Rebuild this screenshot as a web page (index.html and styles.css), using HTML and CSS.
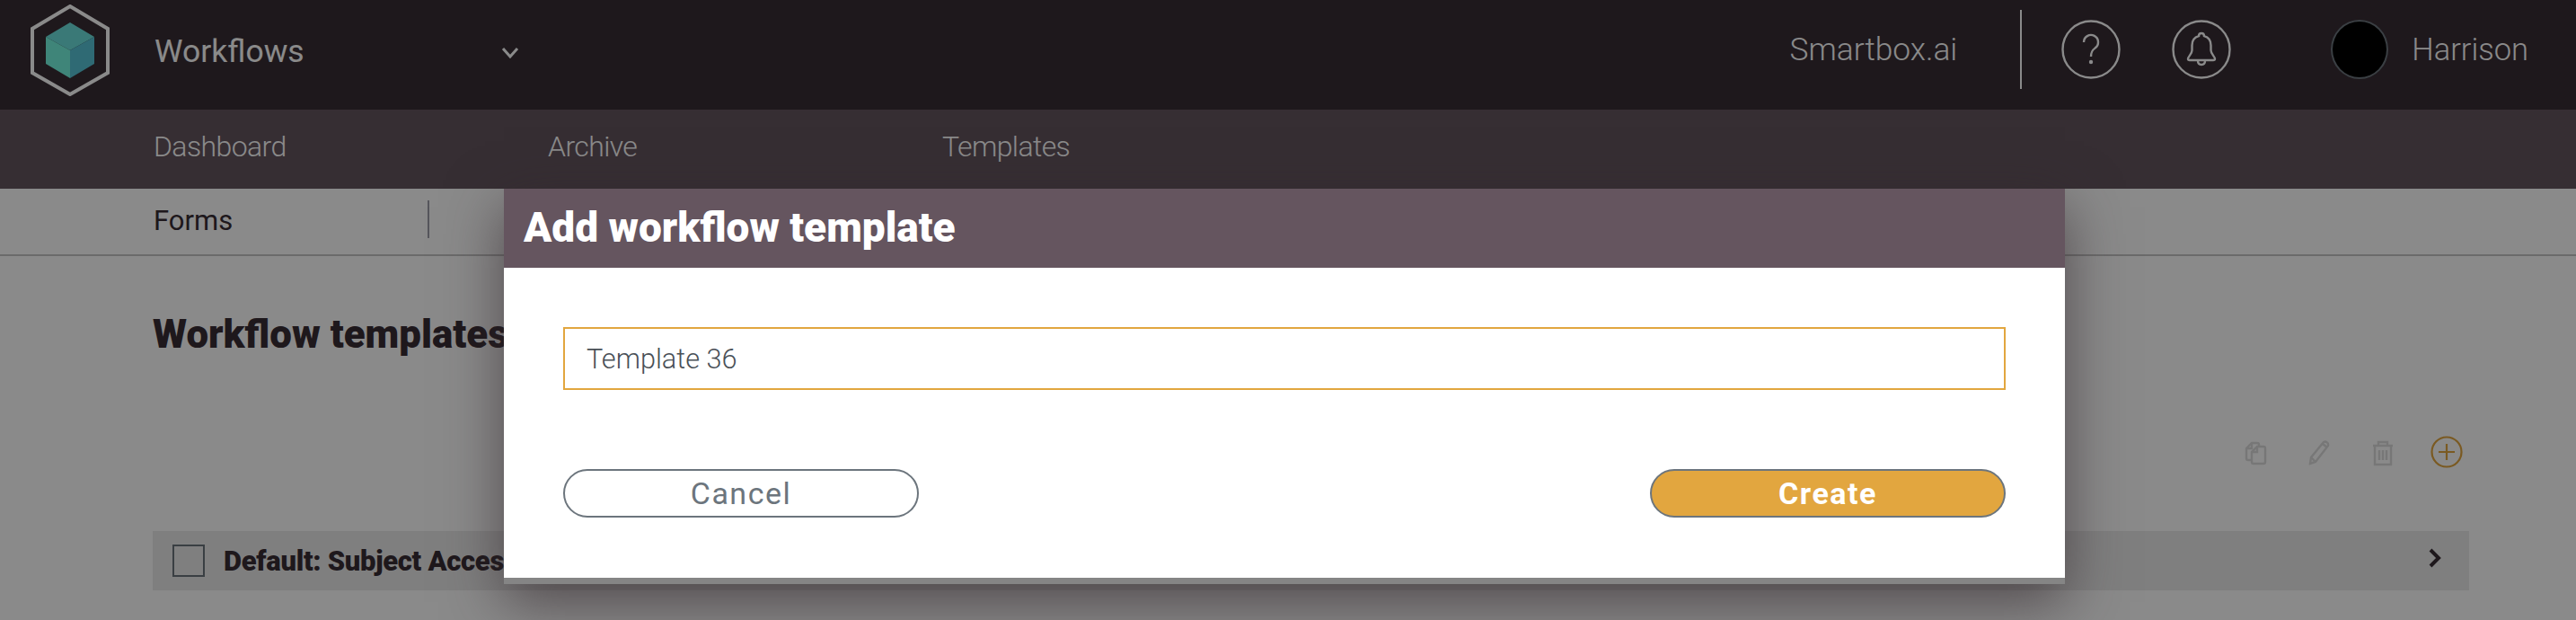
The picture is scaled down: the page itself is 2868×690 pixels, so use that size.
FILE: index.html
```html
<!DOCTYPE html>
<html lang="en">
<head>
    <meta charset="UTF-8">
    <meta name="viewport" content="width=device-width, initial-scale=1.0">
    <title>Workflow templates</title>
    <link rel="stylesheet" href="styles.css">
</head>
<body>
    <header class="topbar">
        <svg class="logo" width="88" height="102" viewBox="34 5 88 102">
            <polygon points="78,7 120,32 120,81 78,105 36,81 36,32" fill="none" stroke="#fff" stroke-width="4"/>
            <polygon points="78,25 105,41 78,56 51,41" fill="#6be0dc"/>
            <polygon points="51,41 78,56 78,87 51,71" fill="#75f5e0"/>
            <polygon points="78,56 105,41 105,71 78,87" fill="#57c4d6"/>
        </svg>
        <div class="app-title">Workflows</div>
        <svg class="app-caret" width="20" height="13" viewBox="0 0 20 13">
            <path d="M2 2l8 9 8-9" fill="none" stroke="#fff" stroke-width="3"/>
        </svg>
        <div class="top-right">
            <span class="top-text top-brand">Smartbox.ai</span>
            <span class="top-divider"></span>
            <svg class="help-icon" width="66" height="66" viewBox="0 0 66 66" fill="none" stroke="#fff" stroke-width="2.4">
                <circle cx="33" cy="33" r="31.5"/>
                <path d="M25 25a8 8 0 1 1 12.500 6.600c-3 2.200-4.500 4-4.500 9.400"/>
                <circle cx="33" cy="47" r="2.200" fill="#fff" stroke="none"/>
            </svg>
            <svg class="bell-icon" width="66" height="66" viewBox="0 0 66 66" fill="none" stroke="#fff" stroke-width="2.400">
                <circle cx="33" cy="33" r="31.500"/>
                <path d="M33 15c-1.800 0-3 1.300-3 3.200c-5 1.400-7.500 5.500-7.500 10.300v5.500c0 4-4.500 7-4.500 9.500c0 1 .8 1.500 2 1.500h26c1.200 0 2-.5 2-1.500c0-2.500-4.500-5.500-4.500-9.500v-5.500c0-4.800-2.500-8.900-7.500-10.300c0-1.900-1.200-3.200-3-3.200z"/>
                <path d="M29 45.500c0 3 1.800 4.500 4 4.500s4-1.500 4-4.500"/>
            </svg>
            <span class="avatar"></span>
            <span class="top-text">Harrison</span>
        </div>
    </header>

    <nav class="subnav">
        <a>Dashboard</a>
        <a>Archive</a>
        <a>Templates</a>
    </nav>

    <div class="tabs">
        <div class="tab">Forms</div>
    </div>

    <main class="content">
        <h1>Workflow templates</h1>
        <div class="toolbar">
            <svg width="36" height="36" viewBox="0 0 36 36" fill="none" stroke="#dcdcdc" stroke-width="2.400">
                <path d="M14 27h-4a2 2 0 0 1-2-2V14l6-6h6a2 2 0 0 1 2 2v2"/>
                <path d="M14 8v6H8"/>
                <path d="M20 12h7a2 2 0 0 1 2 2v15a2 2 0 0 1-2 2H16a2 2 0 0 1-2-2V18z"/>
                <path d="M20 12v6h-6"/>
            </svg>
            <svg width="36" height="36" viewBox="0 0 36 36" fill="none" stroke="#dcdcdc" stroke-width="2.400">
                <path d="M9 24L23 7a3.500 3.500 0 0 1 5 4L14 29l-6 2z"/>
                <path d="M9 24l5 5M22 9l5 4"/>
            </svg>
            <svg width="36" height="36" viewBox="0 0 36 36" fill="none" stroke="#dcdcdc" stroke-width="2.400">
                <path d="M7 11h22M9 11v21h18V11M13 11V7h10v4"/>
                <path d="M14 16v11M18 16v11M22 16v11"/>
            </svg>
            <svg width="36" height="36" viewBox="0 0 36 36" fill="none" stroke="#e2a63f" stroke-width="2.200">
                <circle cx="18" cy="18" r="16.500"/>
                <path d="M9 18h18M18 9v18"/>
            </svg>
        </div>
        <div class="row">
            <span class="checkbox"></span>
            <span class="row-name">Default: Subject Access Request</span>
            <svg class="row-arrow" width="16" height="24" viewBox="0 0 16 24">
                <path d="M3 3l9 9-9 9" fill="none" stroke="#382d35" stroke-width="4"/>
            </svg>
        </div>
    </main>

    <div class="overlay"></div>

    <section class="modal">
        <div class="modal-head">Add workflow template</div>
        <div class="modal-body">
            <input class="name-input" type="text" value="Template 36">
            <div class="modal-actions">
                <button class="btn btn-cancel">Cancel</button>
                <button class="btn btn-create">Create</button>
            </div>
        </div>
    </section>
</body>
</html>
```

FILE: styles.css
```css
* {
    box-sizing: border-box;
}
html, body {
    height: 690px;
    overflow: hidden;
}
body {
    margin: 0;
    font-family: Roboto, Arial, sans-serif;
    background: #fff;
    color: #382d35;
}

/* top bar */
.topbar {
    display: flex;
    align-items: center;
    height: 122px;
    padding: 0 53px 0 34px;
    background: #382d35;
    color: #fff;
}
.logo {
    flex: none;
    margin-bottom: 11px;
}
.app-title {
    width: 386px;
    margin-left: 50px;
    font-size: 35.500px;
    margin-bottom: 8px;
}
.app-caret {
    margin-bottom: 6px;
}
.top-right {
    display: flex;
    align-items: center;
    margin-left: auto;
    margin-bottom: 12px;
}
.top-text {
    font-size: 34.500px;
    font-weight: 300;
}
.top-brand {
    font-size: 35.300px;
}
.top-divider {
    width: 2px;
    height: 88px;
    margin: 0 44px 0 70px;
    background: #fff;
}
.help-icon {
    margin-right: 57px;
}
.bell-icon {
    margin-right: 111px;
}
.avatar {
    width: 64px;
    height: 66px;
    margin-right: 26px;
    border: 2px solid #6c757d;
    border-radius: 50%;
    background: #000;
}

/* second and third nav rows */
.subnav {
    display: grid;
    grid-template-columns: 439px 439px 439px;
    align-items: center;
    height: 88px;
    padding: 0 0 6px 171px;
    background: #65555f;
    color: #fff;
    font-size: 32px;
    font-weight: 300;
    letter-spacing: -0.600px;
}
.tabs {
    display: flex;
    align-items: center;
    height: 75px;
    padding-left: 171px;
    border-bottom: 2px solid #c6c6c6;
}
.tab {
    width: 307px;
    height: 42px;
    margin-bottom: 5px;
    border-right: 2px solid #a0a0aa;
    font-size: 31px;
    line-height: 46px;
}

/* page content */
.content {
    padding: 0 119px 0 170px;
}
h1 {
    margin: 62px 0 0;
    font-size: 43.800px;
    line-height: 50px;
    font-weight: 900;
}
.toolbar {
    display: flex;
    justify-content: flex-end;
    gap: 35px;
    margin-top: 88px;
    padding-right: 7px;
}
.row {
    display: flex;
    align-items: center;
    height: 66px;
    margin-top: 70px;
    padding: 0 30px 0 22px;
    background: #ebebeb;
}
.checkbox {
    width: 36px;
    height: 36px;
    border: 2px solid #6c757d;
    background: #ebebeb;
}
.row-name {
    margin-left: 21px;
    font-size: 31px;
    font-weight: 900;
    letter-spacing: -0.300px;
}
.row-arrow {
    margin: 0 0 7px auto;
}

/* modal */
.overlay {
    position: absolute;
    inset: 0;
    background: rgba(0, 0, 0, 0.46);
}
.modal {
    position: absolute;
    top: 210px;
    left: 561px;
    width: 1738px;
    height: 440px;
    padding-bottom: 7px;
    background: #858585;
    box-shadow: 0 20px 60px rgba(50, 40, 45, 0.65);
}
.modal-head {
    display: flex;
    align-items: center;
    height: 88px;
    padding: 0 0 3px 22px;
    background: #65555f;
    color: #fff;
    font-size: 46px;
    font-weight: 900;
}
.modal-body {
    height: 345px;
    padding: 66px 66px 0;
    background: #fff;
}
.name-input {
    display: block;
    width: 100%;
    height: 70px;
    padding: 0 24px;
    border: 2px solid #e2a63f;
    outline: none;
    font-family: Roboto, Arial, sans-serif;
    font-size: 30.700px;
    font-weight: 300;
    color: #495057;
}
.modal-actions {
    display: flex;
    justify-content: space-between;
    margin-top: 88px;
}
.btn {
    width: 396px;
    height: 54px;
    border: 2px solid #6c757d;
    border-radius: 27px;
    font-family: Roboto, Arial, sans-serif;
    font-size: 34px;
    letter-spacing: 1.500px;
    padding: 0;
}
.btn-cancel {
    background: #fff;
    color: #6c757d;
}
.btn-create {
    background: #e2a63f;
    color: #fff;
    font-weight: 700;
}
```
